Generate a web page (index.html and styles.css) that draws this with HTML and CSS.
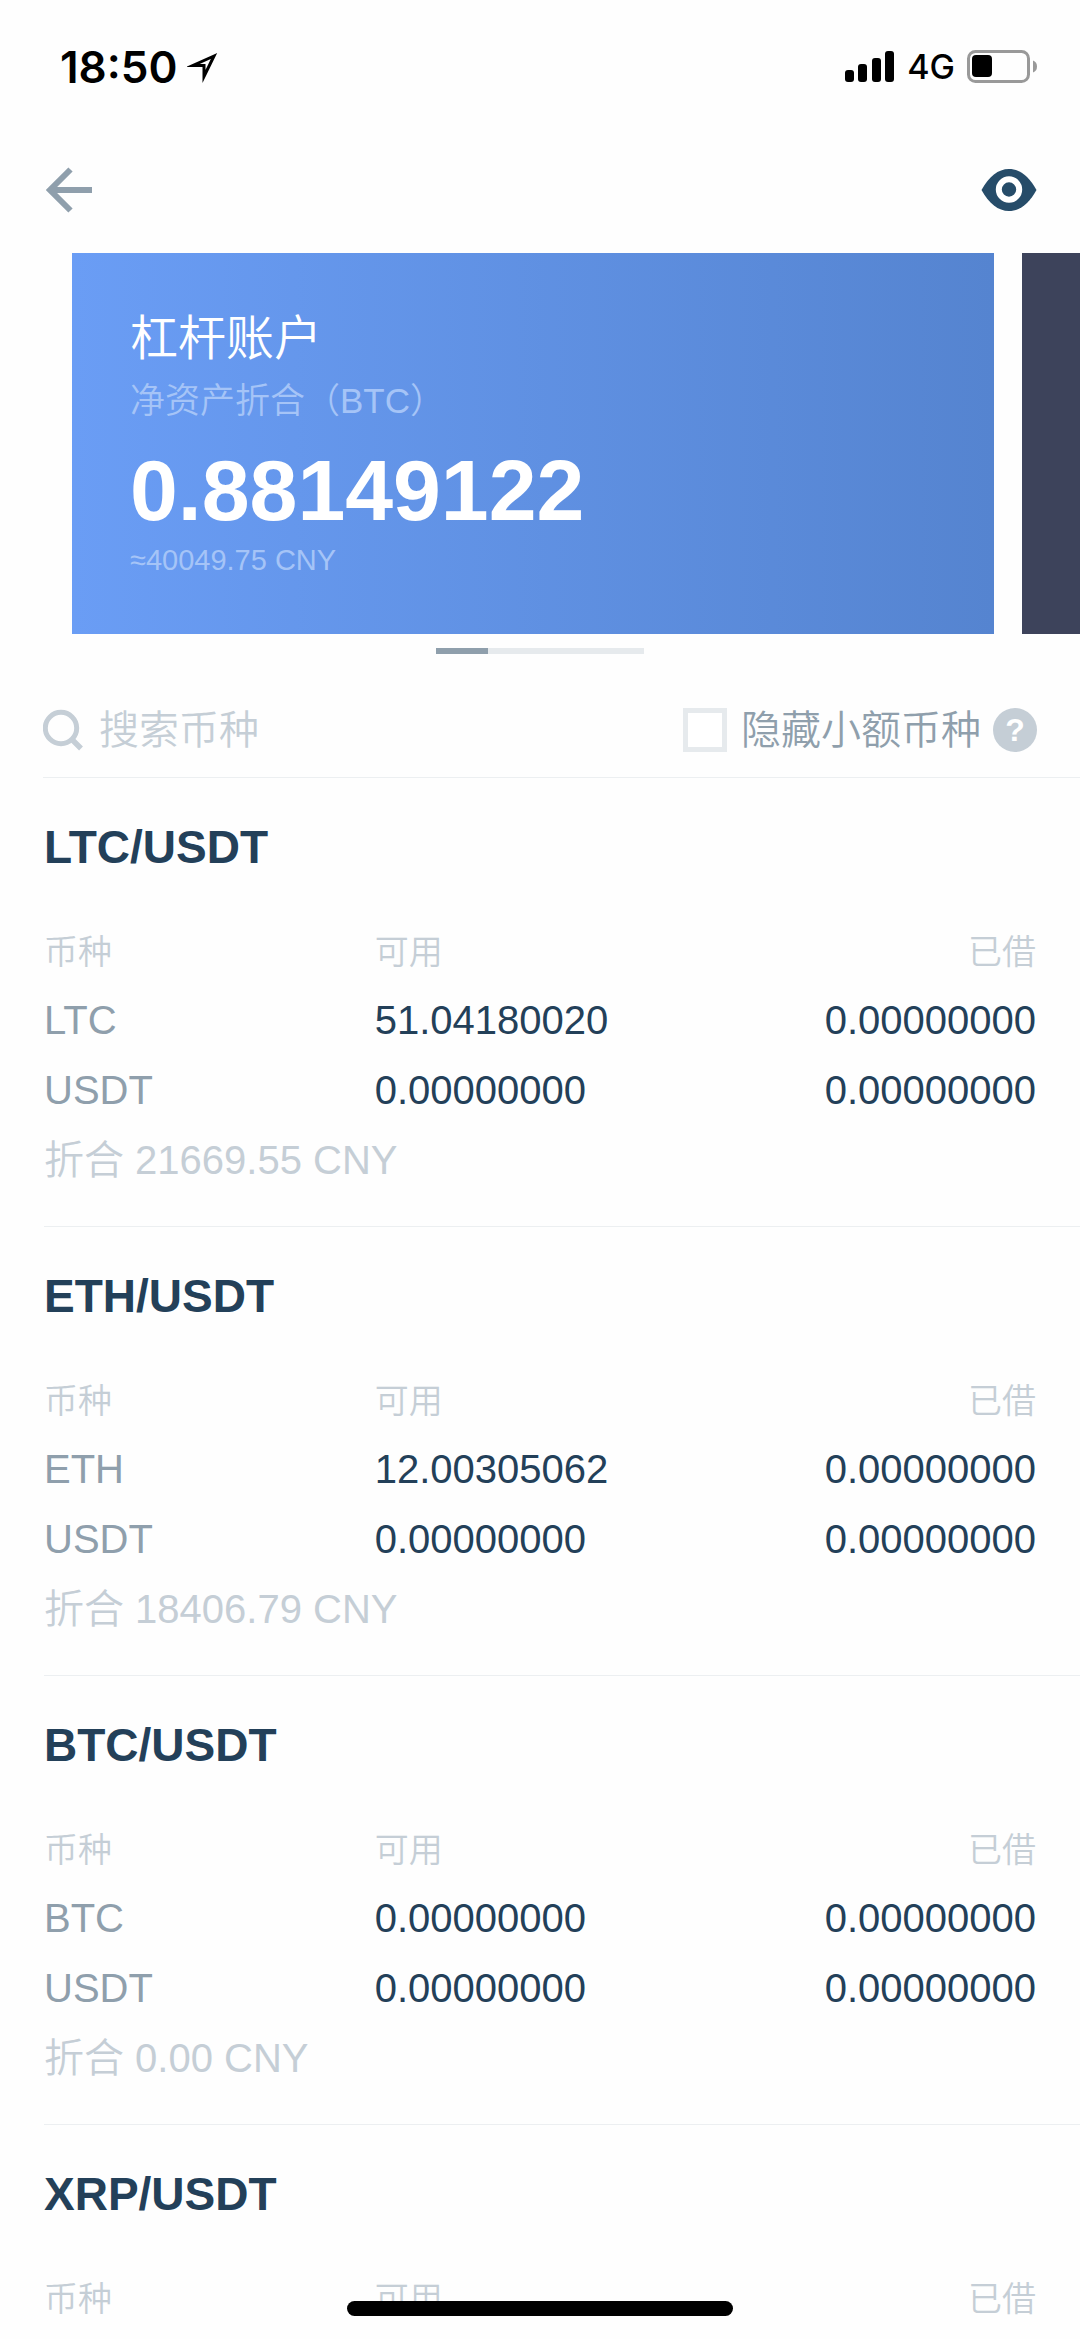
FILE: index.html
```html
<!DOCTYPE html>
<html lang="zh-CN">
<head>
<meta charset="utf-8">
<meta name="viewport" content="width=device-width, initial-scale=1">
<title>杠杆账户</title>
<link rel="stylesheet" href="styles.css">
</head>
<body>
<div class="app">
  <div class="status">
    <div class="status-group">
      <span class="clock">18:50</span>
      <svg class="location" width="32" height="32" viewBox="0 0 32 32" aria-hidden="true"><path fill="none" stroke="#000" stroke-width="3" stroke-linejoin="miter" stroke-miterlimit="8" d="M27 5L6 14.500H17V25.500Z"/></svg>
    </div>
    <div class="status-group status-right">
      <svg class="signal" width="50" height="32" viewBox="0 0 50 32" aria-hidden="true"><rect x="0" y="19" width="9" height="12" rx="3"/><rect x="13" y="13" width="9" height="18" rx="3"/><rect x="27" y="7" width="9" height="24" rx="3"/><rect x="40" y="0" width="9" height="31" rx="3"/></svg>
      <span class="network">4G</span>
      <svg class="battery" width="71" height="34" viewBox="0 0 71 34" aria-hidden="true"><rect x="1.500" y="1.500" width="60" height="30" rx="7" fill="none" stroke="#999" stroke-width="3"/><rect x="5" y="5" width="20" height="22" rx="4"/><path fill="#999" d="M66 10.500q4 1.500 4 6t-4 6z"/></svg>
    </div>
  </div>

  <header class="nav">
    <button class="icon-button" type="button" aria-label="返回">
      <svg width="48" height="48" viewBox="0 0 48 48" aria-hidden="true"><path fill="none" stroke="#8f9fac" stroke-width="6" d="M48 24H6M26.500 3.500L6 24l20.500 20.500"/></svg>
    </button>
    <button class="icon-button" type="button" aria-label="显示资产">
      <svg width="56" height="48" viewBox="0 0 56 48" aria-hidden="true"><path fill="#264c69" d="M.5 24C8 10.500 17 3 28 3s20 7.500 27.500 21C48 37.500 39 45 28 45S8 37.500.5 24z"/><circle cx="28" cy="23.500" r="10.200" fill="#264c69" stroke="#fff" stroke-width="6"/></svg>
    </button>
  </header>

  <main>
    <section class="carousel" aria-label="账户">
      <article class="card card-margin">
        <h1 class="card-title">杠杆账户</h1>
        <p class="card-label">净资产折合（BTC）</p>
        <p class="card-amount">0.88149122</p>
        <p class="card-fiat">≈40049.75 CNY</p>
      </article>
      <article class="card card-next"></article>
    </section>
    <div class="pager"><span class="pager-thumb"></span></div>

    <form class="filters">
      <label class="search">
        <svg width="40" height="42" viewBox="0 0 40 42" aria-hidden="true"><g fill="none" stroke="#c5ced6"><circle cx="18" cy="19" r="15.700" stroke-width="5"/><path stroke-width="5.500" d="M28.500 30l9.500 9.500"/></g></svg>
        <input class="search-input" type="text" placeholder="搜索币种" aria-label="搜索币种">
      </label>
      <div class="hide-small">
        <input class="checkbox" type="checkbox" id="hide-small">
        <label for="hide-small">隐藏小额币种</label>
        <button class="help" type="button" aria-label="说明">?</button>
      </div>
    </form>

    <section class="pair">
      <h2 class="pair-name">LTC/USDT</h2>
      <table class="balances">
        <thead><tr><th>币种</th><th>可用</th><th>已借</th></tr></thead>
        <tbody>
          <tr><th>LTC</th><td>51.04180020</td><td>0.00000000</td></tr>
          <tr><th>USDT</th><td>0.00000000</td><td>0.00000000</td></tr>
        </tbody>
      </table>
      <p class="worth">折合 21669.55 CNY</p>
    </section>

    <section class="pair">
      <h2 class="pair-name">ETH/USDT</h2>
      <table class="balances">
        <thead><tr><th>币种</th><th>可用</th><th>已借</th></tr></thead>
        <tbody>
          <tr><th>ETH</th><td>12.00305062</td><td>0.00000000</td></tr>
          <tr><th>USDT</th><td>0.00000000</td><td>0.00000000</td></tr>
        </tbody>
      </table>
      <p class="worth">折合 18406.79 CNY</p>
    </section>

    <section class="pair">
      <h2 class="pair-name">BTC/USDT</h2>
      <table class="balances">
        <thead><tr><th>币种</th><th>可用</th><th>已借</th></tr></thead>
        <tbody>
          <tr><th>BTC</th><td>0.00000000</td><td>0.00000000</td></tr>
          <tr><th>USDT</th><td>0.00000000</td><td>0.00000000</td></tr>
        </tbody>
      </table>
      <p class="worth">折合 0.00 CNY</p>
    </section>

    <section class="pair pair-last">
      <h2 class="pair-name">XRP/USDT</h2>
      <table class="balances">
        <thead><tr><th>币种</th><th>可用</th><th>已借</th></tr></thead>
      </table>
    </section>
  </main>
  <div class="home-bar"></div>
</div>
</body>
</html>
```
FILE: styles.css
```css
* { box-sizing: border-box; }

body {
  margin: 0;
  background: #fefefe;
  color: #234059;
  font-family: "Liberation Sans", "Noto Sans CJK SC", sans-serif;
  font-size: 40px;
}

h1, h2, p { margin: 0; font-weight: 400; }

.app {
  min-height: 100vh;
  overflow: hidden;
}

/* status bar */
.status {
  display: flex;
  justify-content: space-between;
  align-items: center;
  padding: 44px 42px 40px 60px;
  color: #000;
  font-family: Inter, sans-serif;
  line-height: 46px;
}
.status-group {
  display: flex;
  align-items: center;
  gap: 9px;
}
.status-right { gap: 12px; }
.status svg { display: block; }
.clock { font-size: 44px; font-weight: 600; }
.network { font-size: 34px; font-weight: 500; }

/* navigation */
.nav {
  display: flex;
  justify-content: space-between;
  padding: 36px 43px 39px 44px;
}
.icon-button {
  padding: 0;
  border: 0;
  background: none;
}
.icon-button svg { display: block; }

/* account cards */
.carousel {
  display: flex;
  gap: 28px;
  margin-left: 72px;
  overflow: hidden;
}
.card {
  flex: none;
  width: calc(100vw - 158px);
  padding: 56px 58px 54px;
}
.card-margin {
  background: linear-gradient(90deg, #6a9df5, #5584d0);
  color: #fff;
}
.card-next { background: #3d435b; }
.card-title {
  font-size: 48px;
  font-weight: 350;
  line-height: 60px;
}
.card-label {
  margin-top: 8px;
  color: #a5c4f7;
  font-size: 35px;
  font-weight: 350;
  line-height: 48px;
}
.card-amount {
  margin-top: 15px;
  font-size: 86px;
  font-weight: 700;
  line-height: 100px;
}
.card-fiat {
  color: #a5c4f7;
  font-size: 29px;
  line-height: 40px;
}

.pager {
  width: 208px;
  height: 6px;
  margin: 14px auto 0;
  background: #e6eaed;
}
.pager-thumb {
  display: block;
  width: 25%;
  height: 100%;
  background: #8f9fac;
}

/* search and filter row */
.filters {
  display: flex;
  justify-content: space-between;
  align-items: center;
  margin: 28px 0 0 43px;
  padding: 18px 43px 17px 0;
  border-bottom: 1px solid #eceff1;
  font-weight: 350;
  line-height: 60px;
}
.search {
  display: flex;
  flex: 1;
  align-items: center;
  gap: 16px;
  min-width: 0;
}
.search svg { flex: none; }
.search-input {
  flex: 1;
  min-width: 0;
  height: 60px;
  padding: 0;
  border: 0;
  background: none;
  color: inherit;
  font: inherit;
}
.search-input::placeholder { color: #c5ced6; opacity: 1; }
.hide-small {
  display: flex;
  align-items: center;
  color: #8f9fac;
}
.checkbox {
  appearance: none;
  width: 44px;
  height: 44px;
  margin: 0 14px 0 0;
  border: 5px solid #e6eaed;
  background: #fff;
}
.help {
  width: 44px;
  height: 44px;
  margin-left: 12px;
  padding: 0;
  border: 0;
  border-radius: 50%;
  background: #c5ced6;
  color: #fff;
  font: 700 32px/44px "Liberation Sans", sans-serif;
}

/* trading pairs */
.pair {
  margin-left: 44px;
  padding: 41px 0 31px;
  border-bottom: 1px solid #eceff1;
}
.pair-last { padding-bottom: 0; border: 0; }
.pair-name {
  font-size: 46px;
  font-weight: 700;
  line-height: 56px;
}
.balances {
  width: calc(100% - 44px);
  margin-top: 44px;
  border-collapse: collapse;
  table-layout: fixed;
}
.balances th,
.balances td {
  height: 70px;
  padding: 0;
  font-weight: 400;
  line-height: 60px;
  text-align: left;
}
.balances tbody th { color: #8f9fac; }
.balances thead th {
  height: 66px;
  color: #c5ced6;
  font-size: 34px;
  font-weight: 350;
}
.balances th:last-child,
.balances td:last-child { text-align: right; }
.worth {
  color: #c5ced6;
  font-weight: 350;
  line-height: 70px;
}

/* system home indicator */
.home-bar {
  position: fixed;
  bottom: 23px;
  left: 50%;
  width: 386px;
  height: 15px;
  margin-left: -193px;
  border-radius: 8px;
  background: #000;
}
```
